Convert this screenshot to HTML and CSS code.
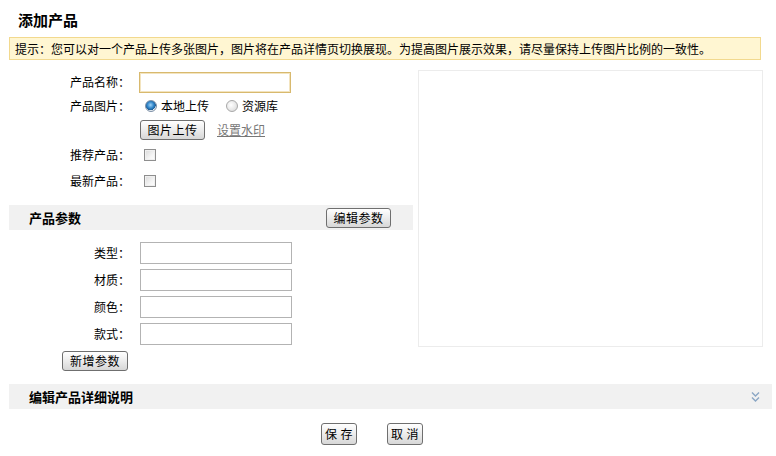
FILE: index.html
```html
<!DOCTYPE html>
<html lang="zh-CN">
<head>
<meta charset="utf-8">
<title>添加产品</title>
<link rel="stylesheet" href="styles.css">
</head>
<body>
<div class="page">
  <h1 class="title">添加产品</h1>
  <div class="notice">提示：您可以对一个产品上传多张图片，图片将在产品详情页切换展现。为提高图片展示效果，请尽量保持上传图片比例的一致性。</div>

  <div class="main">
    <div class="left">
      <div class="row r-name">
        <label class="lbl">产品名称：</label>
        <input class="txt focus" type="text">
      </div>
      <div class="row r-radio">
        <label class="lbl">产品图片：</label>
        <label class="opt"><input class="radio" type="radio" name="src" checked>本地上传</label>
        <label class="opt"><input class="radio" type="radio" name="src">资源库</label>
      </div>
      <div class="row r-btn">
        <span class="lbl"></span>
        <button class="btn w65" type="button">图片上传</button>
        <a class="link" href="#">设置水印</a>
      </div>
      <div class="row r-chk1">
        <label class="lbl">推荐产品：</label>
        <input class="chk" type="checkbox">
      </div>
      <div class="row r-chk2">
        <label class="lbl">最新产品：</label>
        <input class="chk" type="checkbox">
      </div>

      <div class="bar bar-params">
        <span class="bar-title">产品参数</span>
        <button class="btn w65" type="button">编辑参数</button>
      </div>

      <div class="params">
        <div class="prow"><label class="lbl">类型：</label><input class="txt" type="text"></div>
        <div class="prow"><label class="lbl">材质：</label><input class="txt" type="text"></div>
        <div class="prow"><label class="lbl">颜色：</label><input class="txt" type="text"></div>
        <div class="prow"><label class="lbl">款式：</label><input class="txt" type="text"></div>
      </div>
      <div class="add-row">
        <button class="btn w66" type="button">新增参数</button>
      </div>
    </div>
    <div class="preview"></div>
  </div>

  <div class="bar bar-detail">
    <span class="bar-title">编辑产品详细说明</span>
    <svg class="chev" width="9" height="12" viewBox="0 0 9 12" aria-hidden="true">
      <path d="M1 1.5 L4.5 5 L8 1.5" fill="none" stroke="#8aa6c4" stroke-width="1.4"/>
      <path d="M1 6.5 L4.5 10 L8 6.5" fill="none" stroke="#8aa6c4" stroke-width="1.4"/>
    </svg>
  </div>

  <div class="footer">
    <button class="btn w36" type="button">保 存</button>
    <button class="btn w36" type="button">取 消</button>
  </div>
</div>
</body>
</html>
```

FILE: styles.css
```css
* { box-sizing: border-box; }
html, body { margin: 0; padding: 0; background: #fff; }
body {
  font-family: "Noto Sans CJK SC", "Liberation Sans", sans-serif;
  font-size: 12px;
  color: #000;
  line-height: 1;
}
.page { width: 776px; }

.title {
  margin: 0;
  padding: 12px 0 0 18px;
  height: 37px;
  font-size: 15px;
  font-weight: bold;
  color: #000;
  line-height: 16px;
}

.notice {
  margin: 0 15px 0 9px;
  height: 23px;
  padding: 0 0 0 5px;
  background: #fff6d2;
  border: 1px solid #f2d98e;
  line-height: 21px;
  font-size: 12px;
  color: #000;
  white-space: nowrap;
}

.main {
  display: flex;
  margin: 10px 0 0 9px;
  gap: 5px;
}
.left { width: 404px; }

.row {
  display: flex;
  align-items: center;
}
.lbl {
  width: 121px;
  text-align: right;
  padding-right: 0;
  flex: none;
  color: #000;
}
.row .lbl { margin-right: 10px; }
.r-name { height: 24px; }
.r-radio { height: 24px; }
.r-btn { height: 24px; }
.r-chk1 { height: 26px; }
.r-chk2 { height: 25px; }

.txt {
  width: 152px;
  height: 22px;
  margin: 0;
  border: 1px solid #b3b3b3;
  background: #fff;
  padding: 0 3px;
  font: inherit;
  outline: none;
}
.txt.focus {
  height: 21px;
  border: 1px solid #d8b96e;
  box-shadow: inset 0 0 0 1px #f3e4bf;
}
.r-name .txt { margin-left: -1px; }

.opt {
  display: inline-flex;
  align-items: center;
  margin-right: 12px;
  color: #000;
}
.radio {
  appearance: none;
  -webkit-appearance: none;
  width: 12px;
  height: 12px;
  margin: 0 4px 0 5px;
  border-radius: 50%;
  border: 1px solid #a8a8a8;
  background: radial-gradient(circle at 40% 40%, #ffffff 0, #e6e6e6 60%, #cfcfcf 100%);
}
.radio:checked {
  border-color: #7c8fa6;
  background: radial-gradient(circle at 45% 40%, #9fd3f7 0, #2f84c8 40%, #1d5d96 62%, #e9eef3 66%, #d4dbe2 100%);
}

.btn {
  height: 20px;
  margin: 0;
  padding: 0;
  border: 1px solid #6f6f6f;
  border-radius: 3px;
  background: linear-gradient(#ffffff, #ececec 50%, #d7d7d7);
  font: inherit;
  font-size: 12px;
  color: #000;
  line-height: 18px;
  text-align: center;
  letter-spacing: 0.5px;
}
.w65 { width: 65px; }
.w66 { width: 66px; }
.w36 { width: 36px; height: 22px; }

.link {
  margin-left: 12px;
  color: #777;
  text-decoration: underline;
}

.chk {
  appearance: none;
  -webkit-appearance: none;
  width: 12px;
  height: 12px;
  margin: 0 0 0 4px;
  border: 1px solid #8e8e8e;
  background: linear-gradient(135deg, #d9d9d9, #f4f4f4 60%, #ffffff);
  box-shadow: inset 0 0 0 1px #f0f0f0;
}

.bar {
  display: flex;
  align-items: center;
  justify-content: space-between;
  height: 25px;
  background: #f1f1f1;
  padding: 0 22px 0 20px;
}
.bar-title {
  font-size: 13px;
  font-weight: bold;
  color: #000;
}
.bar-params { margin-top: 12px; }

.params {
  display: flex;
  flex-direction: column;
  gap: 5px;
  margin-top: 12px;
}
.prow {
  display: flex;
  align-items: center;
}
.prow .lbl { margin-right: 10px; }

.add-row {
  padding: 6px 0 0 53px;
}

.preview {
  width: 345px;
  height: 277px;
  border: 1px solid #ececec;
  background: #fff;
}

.bar-detail {
  margin: 13px 4px 0 9px;
  padding-right: 12px;
}
.chev { display: block; }

.footer {
  display: flex;
  gap: 30px;
  padding: 14px 0 0 321px;
}
```
